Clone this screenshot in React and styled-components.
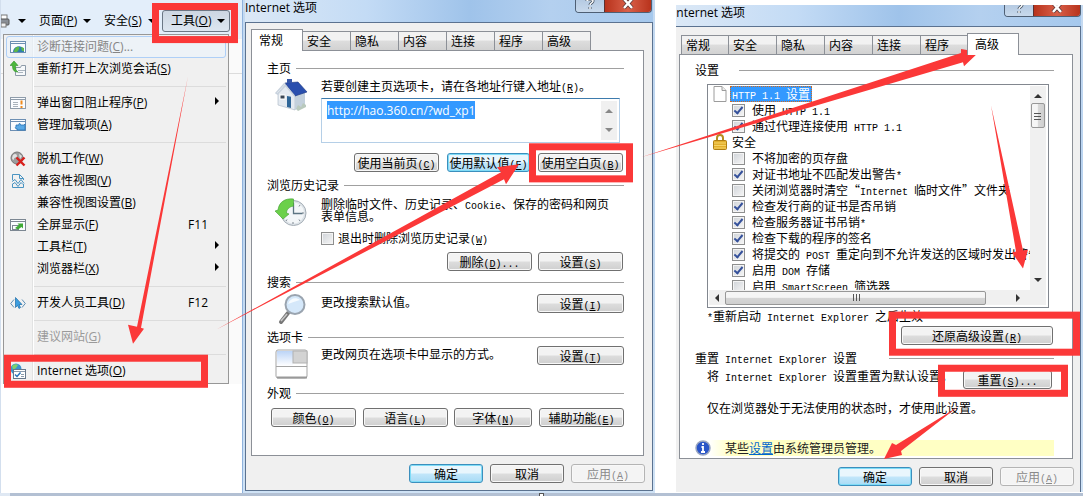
import React from "react";
import styled, { createGlobalStyle, css } from "styled-components";

const ui = `"Open Sans", "Noto Sans CJK SC", sans-serif`;
const song = `"Noto Sans CJK SC", "Liberation Sans", sans-serif`;
const red = "#fb3838";

const Global = createGlobalStyle`
  *, *::before, *::after { box-sizing: border-box; }
  body { margin: 0; background: #fff; color: #000; font: 12px/16px ${song}; }
  button, input { font: inherit; color: inherit; margin: 0; }
`;

/* ---------- text with accelerator keys ---------- */
const Half = styled.span`
  font: 10px/0 "Liberation Mono", monospace;
  white-space: pre;
`;

const accel = (s) => {
  const i = s.indexOf("&");
  if (i < 0) return s;
  return (
    <>
      {s.slice(0, i)}
      <u>{s[i + 1]}</u>
      {s.slice(i + 2)}
    </>
  );
};

const T = ({ children }) =>
  children
    .split(/([\x20-\x7e]+)/)
    .map((part, i) => (i % 2 ? <Half key={i}>{accel(part)}</Half> : part));

/* ---------- page ---------- */
const Page = styled.main`
  position: relative;
  overflow: hidden;
`;

const Columns = styled.div`
  display: grid;
  grid-template-columns: minmax(0, 242fr) minmax(0, 413fr) 21fr minmax(0, 407fr);
  align-items: start;
`;

const Taskbar = styled.div`
  display: flex;
  justify-content: center;
  height: 4px;
  background: linear-gradient(90deg, #dfe8f3 10px, #b3c0d3 10px);
`;

const Handle = styled.i`
  width: 5px;
  border: 1px solid #555;
  border-bottom: 0;
  background: #fff;
`;

const Marks = styled.svg`
  position: absolute;
  inset: 0;
  width: 100%;
  height: 100%;
  pointer-events: none;
`;

/* ---------- browser column ---------- */
const Browser = styled.section`
  height: 100%;
  border-left: 1px solid #d3dfee;
  font-family: ${ui};
`;

const CommandBar = styled.div`
  display: flex;
  align-items: center;
  height: 34px;
  padding-top: 7px;
  background: #e3eefa;
`;

const Command = styled.button`
  display: flex;
  align-items: center;
  justify-content: space-between;
  width: 65px;
  height: 22px;
  padding: 0 13px 0 0;
  border: 0;
  background: none;
  white-space: nowrap;
  ${(p) =>
    p.$first &&
    css`
      width: 38px;
    `}
  ${(p) =>
    p.$open &&
    css`
      width: 68px;
      margin-left: -7px;
      padding: 0 4px 0 8px;
      border: 1px solid #6b7785;
      border-radius: 3px;
      background: linear-gradient(#ccd6e2, #dde6f0);
    `}
`;

const Down = styled.i`
  border: 4px solid transparent;
  border-top-color: #000;
  border-bottom: 0;
`;

const MenuWrap = styled.div`
  padding: 0 13px 0 2px;
  background: linear-gradient(#e9f0f8 5px, #fafafa 5px 39px, #dcdcdc 39px 40px, #fafafa 40px);
`;

const Menu = styled.div`
  position: relative;
  padding: 1px 2px;
  border: 1px solid #979797;
  background: linear-gradient(90deg, #f1f1f1 28px, #e2e3e3 28px 29px, #fff 29px 30px, #f0f0f0 30px);
`;

const MenuItem = styled.button`
  display: flex;
  align-items: center;
  width: 100%;
  height: 22px;
  padding: 0 17px 0 3px;
  border: 1px solid transparent;
  border-radius: 3px;
  background: none;
  text-align: left;
  white-space: nowrap;
  &:disabled {
    color: #9a9a9a;
  }
  ${(p) =>
    p.$hot &&
    css`
      color: #858585 !important;
      border-color: #aecff7;
      background: rgba(235, 243, 252, 0.6);
    `}
`;

const MenuIcon = styled.span`
  display: flex;
  width: 27px;
`;

const Shortcut = styled.span`
  margin-left: auto;
`;

const Sub = styled.i`
  margin: 0 -11px 4px auto;
  border: 4px solid transparent;
  border-left-color: #000;
  border-right: 0;
`;

const Sep = styled.hr`
  height: 1px;
  margin: 6px 0 5px 28px;
  border: 0;
  background: #dcdcdc;
`;

/* ---------- dialog chrome ---------- */
const Dialog = styled.section`
  ${(p) =>
    p.$cut
      ? css`
          grid-column: 4;
          margin-top: 5px;
          padding: 0 2px 0 0;
        `
      : css`
          padding: 0 2px 2px;
          border-left: 1px solid #8fb2dc;
        `}
  background: linear-gradient(#c5daf1 0, #b9d3ef 160px, #cfe2f5);
`;

const TitleBar = styled.header`
  display: flex;
  align-items: flex-start;
  justify-content: space-between;
  height: ${(p) => (p.$cut ? 21 : 22)}px;
  padding-right: ${(p) => (p.$cut ? 0 : 1)}px;
  overflow: hidden;
  font-family: ${ui};
  background: linear-gradient(90deg, #dbe8f6 0, #c3dbf5 30%, #9fc3ea 55%, #b4d0ef 75%, #a5c8ed);
`;

const Title = styled.h2`
  margin: 0 0 0 ${(p) => (p.$cut ? -3 : 0)}px;
  font-size: 12px;
  font-weight: 400;
`;

const WinButtons = styled.div`
  display: flex;
  height: ${(p) => (p.$cut ? 12 : 13)}px;
  border: 1px solid #4e5f74;
  border-top: 0;
  border-radius: 0 0 4px 4px;
  overflow: hidden;
`;

const WinButton = styled.button`
  display: flex;
  align-items: flex-end;
  justify-content: center;
  width: ${(p) => (p.$close ? 47 : 28)}px;
  height: 100%;
  padding: 0 0 3px;
  border: 0;
  border-left: ${(p) => (p.$close ? "1px solid #5c3030" : "0")};
  background: ${(p) =>
    p.$close
      ? "linear-gradient(90deg, #b8331c, #d9604a 50%, #b8331c)"
      : "linear-gradient(#b5cae2, #c8d9ec)"};
`;

const Client = styled.div`
  padding: ${(p) => (p.$cut ? "6px 7px 6px 3px" : "6px 8px 7px 5px")};
  border: 1px solid #5b7290;
  border-left-width: ${(p) => (p.$cut ? 0 : 1)}px;
  border-bottom-width: ${(p) => (p.$cut ? 0 : 1)}px;
  background: #f0f0f0;
`;

const TabRow = styled.div`
  display: flex;
  align-items: flex-end;
  height: 21px;
  padding-left: ${(p) => (p.$cut ? 2 : 0)}px;
`;

const Tab = styled.button`
  width: 48px;
  height: 19px;
  padding: 0 0 0 4px;
  border: 1px solid #8c9097;
  border-bottom: 0;
  border-left-width: ${(p) => (p.$edge ? 1 : 0)}px;
  background: linear-gradient(#f2f2f2 0 45%, #dddddd 50%, #d2d2d2);
  text-align: left;
  line-height: 18px;
  ${(p) =>
    p.$active &&
    css`
      width: 52px;
      height: 22px;
      margin: 0 0 -1px ${p.$edge ? 0 : -2}px;
      padding: 0 0 2px 7px;
      border-left-width: 1px;
      background: #fff;
      z-index: 1;
    `}
`;

const Sheet = styled.div`
  padding: ${(p) => (p.$cut ? "7px 18px 2px 15px" : "9px 19px 28px 15px")};
  border: 1px solid #8c9097;
  background: #fff;
`;

const Footer = styled.footer`
  display: flex;
  justify-content: flex-end;
  gap: 7px;
  margin: 8px -1px 0 0;
`;

const Button = styled.button`
  width: ${(p) => p.$w || 85}px;
  height: 19px;
  padding: 0;
  border: 1px solid #707070;
  border-radius: 3px;
  background: linear-gradient(#f3f3f3 0 48%, #dddddd 52%, #cfcfcf);
  box-shadow: inset 0 0 0 1px #f8f8f8;
  line-height: 16px;
  white-space: nowrap;
  ${(p) =>
    p.$hot &&
    css`
      border-color: #3c8fbd;
      background: linear-gradient(#e9f6fd 0 48%, #c2e6fa 52%, #a9dbf5);
      box-shadow: inset 0 0 0 1px #7fdcf7;
    `}
  &:disabled {
    color: #8a8a8a;
    border-color: #b4b4b4;
    background: #f4f4f4;
  }
`;

/* ---------- groups ---------- */
const Legend = styled.h3`
  display: flex;
  align-items: center;
  gap: ${(p) => p.$gap || 5}px;
  margin: ${(p) => p.$top || 0}px 0 0;
  font-size: 12px;
  font-weight: 400;
  white-space: nowrap;
  &::after {
    content: "";
    flex: 1;
    height: 1px;
    background: #a0a0a0;
  }
`;

const Body = styled.div`
  display: grid;
  grid-template-columns: 54px minmax(0, 1fr);
  padding-top: ${(p) => p.$top || 0}px;
  min-height: ${(p) => p.$h || 0}px;
`;

const Art = styled.div`
  padding: ${(p) => p.$top || 0}px 0 0 8px;
  height: 0;
`;

const Line = styled.div`
  display: flex;
  justify-content: space-between;
  align-items: flex-start;
  padding-top: 1px;
`;

const Text = styled.p`
  margin: 0;
  line-height: ${(p) => p.$lh || 16}px;
  white-space: nowrap;
`;

const Buttons = styled.div`
  display: flex;
  justify-content: ${(p) => (p.$spread ? "space-between" : "flex-end")};
  gap: ${(p) => (p.$spread ? 0 : p.$gap || 6)}px;
  margin: ${(p) => p.$top || 0}px 0 0;
  padding: 0 ${(p) => (p.$spread ? 0 : 1)}px 0 ${(p) => (p.$spread ? 4 : 0)}px;
`;

const UrlBox = styled.div`
  display: flex;
  justify-content: space-between;
  align-items: flex-start;
  height: 45px;
  margin: 4px 4px 0 0;
  padding: 2px 2px 2px 5px;
  border: 1px solid #b5cfe7;
  border-top-color: #3d7bad;
`;

const Url = styled.input`
  field-sizing: content;
  height: 18px;
  padding: 0;
  border: 0;
  background: #3399ff;
  color: #fff;
  font-family: ${ui};
`;

const ScrollBar = styled.div`
  display: flex;
  flex-direction: ${(p) => (p.$horizontal ? "row" : "column")};
  justify-content: space-between;
  align-items: center;
  width: ${(p) => (p.$horizontal ? "auto" : "16px")};
  height: ${(p) => (p.$horizontal ? "15px" : "100%")};
  padding: ${(p) => (p.$horizontal ? "0 26px 0 6px" : "8px 0")};
  background: #f0f0f0;
`;

const Caret = styled.i`
  border: 4px solid transparent;
  ${(p) => p.$dir === "up" && `border-bottom-color: ${p.$c || "#333"}; border-top: 0;`}
  ${(p) => p.$dir === "down" && `border-top-color: ${p.$c || "#333"}; border-bottom: 0;`}
  ${(p) => p.$dir === "left" && `border-right-color: #333; border-left: 0;`}
  ${(p) => p.$dir === "right" && `border-left-color: #333; border-right: 0;`}
`;

const Thumb = styled.div`
  display: flex;
  align-items: center;
  justify-content: center;
  border: 1px solid #979797;
  border-radius: 2px;
  ${(p) =>
    p.$horizontal
      ? css`
          flex: 1;
          height: 14px;
          margin: 0 30px 0 6px;
          background: linear-gradient(#f5f5f5 45%, #d6d6d6 50%, #cfcfcf);
        `
      : css`
          width: 14px;
          height: 25px;
          margin: 5px 0 auto;
          background: linear-gradient(90deg, #f5f5f5 45%, #d9d9d9 50%, #cfcfcf);
        `}
`;

const Check = styled.label`
  display: flex;
  align-items: center;
  gap: ${(p) => p.$gap || 4}px;
  height: 16px;
  margin-top: ${(p) => p.$top || 0}px;
  white-space: nowrap;
`;

const Box = styled.input`
  appearance: none;
  flex: none;
  display: grid;
  place-items: center;
  width: 13px;
  height: 13px;
  border: 1px solid #8e8f8f;
  background: linear-gradient(135deg, #cfd3d8, #f6f6f6);
  box-shadow: inset 0 0 0 1px #f4f4f4;
  &:checked::after {
    content: "";
    width: 5px;
    height: 9px;
    margin-top: -2px;
    border: solid #35519b;
    border-width: 0 2px 2px 0;
    transform: rotate(40deg);
  }
`;

/* ---------- advanced list ---------- */
const List = styled.div`
  display: grid;
  grid-template-columns: minmax(0, 1fr) auto;
  grid-template-rows: 204px auto;
  margin: 6px 5px 0 12px;
  padding: 1px 2px 2px 1px;
  border: 1px solid #82878f;
`;

const Rows = styled.div`
  overflow: hidden;
`;

const Heading = styled.div`
  display: flex;
  align-items: center;
  gap: 5px;
  height: 16px;
  padding-left: 4px;
`;

const Selected = styled.span`
  padding: 0 2px;
  margin-left: -2px;
  outline: 1px dotted #d2691e;
  outline-offset: -1px;
  background: #3399ff;
  color: #fff;
`;

const Option = styled(Check)`
  padding-left: 23px;
`;

const Across = styled.div`
  grid-column: 1 / -1;
`;

const ResetRow = styled.div`
  display: flex;
  align-items: flex-start;
  justify-content: space-between;
  margin: ${(p) => p.$top}px 2px 0 12px;
`;

const Drop = styled.div`
  padding-top: 2px;
`;

const Notice = styled.div`
  display: flex;
  align-items: center;
  gap: 14px;
  height: 16px;
  margin-top: 24px;
  background: linear-gradient(90deg, #fff 14px, #ffffc4 36px);
  color: #222;
`;

const Link = styled.a`
  color: #0066cc;
`;

/* ---------- icons ---------- */
const Svg16 = ({ children }) => (
  <svg width="16" height="16" viewBox="0 0 16 16" fill="none">
    {children}
  </svg>
);

const Win = ({ c = "#6d8fb3" }) => (
  <>
    <rect x=".5" y="2.5" width="15" height="11" fill="#fafcff" stroke={c} />
    <path d="M1 4.5h14" stroke={c} />
  </>
);

const icons = {
  diagnose: (
    <Svg16>
      <Win />
      <path d="M3 13a6 6 0 0 1 11-3v3z" fill="#2e7fae" />
      <path d="M4 12c1-4 4-5 5-4s-1 4-2 5H4zM11 8l3 1v3h-2z" fill="#5fb84a" />
    </Svg16>
  ),
  reopen: (
    <Svg16>
      <path d="M5.500 6.500h5l1-2h4v10h-10z" fill="#f7f9fb" stroke="#8d9aa8" />
      <path d="M8 9.500h7M8 11.500h5" stroke="#aab4be" />
      <path d="M4 0l4 4.500H5.500c0 4 .5 5 2.500 6.500-4 0-5.500-2-5.500-6.500H0z" fill="#4db83c" stroke="#2f8f2a" strokeWidth=".6" />
    </Svg16>
  ),
  popup: (
    <Svg16>
      <Win c="#8f9caa" />
      <path d="M3 7.500h5M3 9.500h5M3 11.500h5" stroke="#a9b2bb" />
      <path d="M11.500 5.500v4M11.500 11v2" stroke="#ef8a1d" strokeWidth="2" />
    </Svg16>
  ),
  addons: (
    <Svg16>
      <Win />
      <path d="M6 8h3c-1-2 2-2 1.500 0H14l1-1v6H7v-1.500c-2 1-2-2-1-1.500z" fill="#5aa9e6" stroke="#2c74b5" strokeWidth=".8" />
    </Svg16>
  ),
  offline: (
    <Svg16>
      <circle cx="7" cy="7" r="6" fill="#9c9c9c" stroke="#777" />
      <path d="M3 4c2-2 4-1 4 1s-3 1-3 3-2 0-2-1zM9 3l3 2-2 3z" fill="#e2e2e2" />
      <path d="M6.500 6.500l8 8M14.500 6.500l-8 8" stroke="#d8201c" strokeWidth="2.400" />
    </Svg16>
  ),
  compat: (
    <Svg16>
      <path d="M2.500 7V1.500h7l4 4V7M2.500 11v3.500h11V11M9.500 1.500v4h4" stroke="#4a94c2" />
      <path d="M2 8.500l3-2 3 4 3-4 3 4M2 11.500l3-2 3 4 3-4 2 2" stroke="#4a94c2" />
    </Svg16>
  ),
  full: (
    <Svg16>
      <Win c="#7c8792" />
      <rect x="2.500" y="8.500" width="6" height="4" stroke="#7c8792" />
      <path d="M5 11l4-3-1.500-1.500H13v5L11.500 10 8 12.500z" fill="#3faa36" />
    </Svg16>
  ),
  dev: (
    <Svg16>
      <path d="M4 4.500L.7 8.500 4 12.500M12 4.500l3.300 4-3.300 4" stroke="#5c8fb5" />
      <path d="M5.500 2.500v10l2-2 1.500 3 1.500-1-1.500-3H12z" fill="#3c9ee0" stroke="#1d6ba6" strokeWidth=".7" />
    </Svg16>
  ),
  options: (
    <Svg16>
      <circle cx="6" cy="6" r="5.500" fill="#3b93cf" />
      <path d="M2 3c2-2 5-2 6-1L6 5 3 7z" fill="#7fd06a" />
      <rect x="3.500" y="6.500" width="12" height="9" fill="#fff" stroke="#66788c" />
      <path d="M4 8.500h11M11 11.500h3M11 13.500h3" stroke="#8a9aab" />
      <path d="M5 11.500l2 2 3.500-4" stroke="#2672b8" strokeWidth="1.500" />
    </Svg16>
  ),
};

const Printer = () => (
  <svg width="9" height="16" viewBox="0 0 9 16">
    <rect y="2" width="6" height="5" fill="#fff" stroke="#777" />
    <rect x="-3" y="6" width="11" height="6" rx="1" fill="#8a8f96" stroke="#555" />
    <rect y="10" width="5" height="4" fill="#f2f2f2" stroke="#777" />
  </svg>
);

const House = () => (
  <svg width="34" height="32" viewBox="0 0 34 32">
    <path d="M3 14l8-9 9 11v15L3 26z" fill="#e4eaf1" stroke="#a9b5c2" strokeWidth=".6" />
    <path d="M20 16l10-3v13l-10 5z" fill="#c3d0dc" />
    <path d="M10 4l13-1 9 10-12 4z" fill="#2a4fae" stroke="#1b3680" strokeWidth=".6" />
    <path d="M12 0h5v4h-5z" fill="#3757a8" />
    <path d="M10 4L1 14l1.500 1L10.500 6.500l9 10.500" fill="none" stroke="#c9d3de" strokeWidth="1.500" />
    <rect x="5" y="16" width="5" height="4" fill="#3c4856" stroke="#fff" />
    <path d="M12 17l4 .8V29l-4-1z" fill="#2f6698" />
    <path d="M21 30l2-4 3 2 2-4 3 2v2l-8 4z" fill="#b9c9bd" />
  </svg>
);

const History = () => (
  <svg width="34" height="30" viewBox="0 0 34 30">
    <circle cx="18.500" cy="15" r="12.500" fill="#dde3e8" stroke="#a3acb4" />
    <circle cx="18.500" cy="15" r="10.500" fill="#f3f6f8" />
    <path d="M18 4v2M18 24v2M29 15h-2M25 7l-1 1.500M25 23l-1-1.500M11 23l1-1.500" stroke="#7c868f" />
    <path d="M18.500 5v10.500h9" fill="none" stroke="#5c7482" strokeWidth="1.300" />
    <path d="M18.500 1C10 0 4 4 3 12L0 13l8 8 6-5-2.500-1c0-3 2-6 7-7z" fill="#6bd04b" stroke="#3f9d30" strokeWidth=".6" />
  </svg>
);

const Lens = () => (
  <svg width="34" height="33" viewBox="0 0 34 33">
    <path d="M13 20l-7 9" stroke="#777" strokeWidth="4" strokeLinecap="round" />
    <path d="M12 21l-6 7" stroke="#c8c8c8" strokeWidth="1.500" />
    <circle cx="20" cy="11.500" r="9.500" fill="#d5e8fa" stroke="#9aa4af" strokeWidth="2" />
    <path d="M13 11c2-6 8-7 12-4-5 1-8 3-12 4z" fill="#f6fbff" />
  </svg>
);

const TabsArt = () => (
  <svg width="34" height="30" viewBox="0 0 34 30">
    <defs>
      <linearGradient id="tabBlue" x2="0" y2="1">
        <stop stopColor="#bcd4f7" />
        <stop offset="1" stopColor="#fff" />
      </linearGradient>
    </defs>
    <rect x="1" y="1" width="31" height="28" rx="2" fill="#fff" stroke="#a5a5a5" />
    <rect x="2" y="2" width="16" height="15" fill="url(#tabBlue)" />
    <rect x="18" y="2" width="14" height="12" fill="#d3d3d3" stroke="#b2b2b2" />
    <path d="M1 17.500h31" stroke="#a5a5a5" />
    <path d="M2 28.500h30" stroke="#999" strokeWidth="2" />
  </svg>
);

const Sheet16 = () => (
  <svg width="14" height="16" viewBox="0 0 14 16">
    <path d="M1 .5h8l4 4v11H1z" fill="#fff" stroke="#9c9c9c" />
    <path d="M9 .5v4h4" fill="#eee" stroke="#9c9c9c" />
  </svg>
);

const Lock = () => (
  <svg width="14" height="16" viewBox="0 0 14 16">
    <path d="M4 7V4a3 3 0 0 1 6 0v3" fill="none" stroke="#b78c1f" strokeWidth="2" />
    <rect x=".5" y="6.500" width="13" height="9" rx="1" fill="#e3af2a" stroke="#b07f12" />
    <path d="M1 9h12M1 11.500h12M1 14h12" stroke="#f6d468" />
  </svg>
);

const Info = () => (
  <svg width="16" height="16" viewBox="0 0 16 16">
    <circle cx="8" cy="8" r="7" fill="#2a55c8" stroke="#9aa6c0" strokeWidth="1.500" />
    <path d="M8 3v2M6.500 7H8v5M6 12h4" fill="none" stroke="#fff" strokeWidth="1.800" />
  </svg>
);

const Question = () => (
  <svg width="10" height="10" viewBox="0 0 10 10" fill="none">
    <path d="M2 2c0-2 6-2 6 0S5 4 5 6M5 8v2" stroke="#4a5665" strokeWidth="3" />
    <path d="M2 2c0-2 6-2 6 0S5 4 5 6M5 8v2" stroke="#fff" strokeWidth="1.500" />
  </svg>
);

const Cross = () => (
  <svg width="12" height="9" viewBox="0 0 12 9">
    <path d="M2-1l8 9M10-1L2 8" stroke="#5c3535" strokeWidth="4" />
    <path d="M2-1l8 9M10-1L2 8" stroke="#fff" strokeWidth="2.500" />
  </svg>
);

/* ---------- data ---------- */
const menu = [
  { icon: "diagnose", text: "诊断连接问题(&C)...", disabled: true, hot: true },
  { icon: "reopen", text: "重新打开上次浏览会话(&S)" },
  null,
  { icon: "popup", text: "弹出窗口阻止程序(&P)", sub: true },
  { icon: "addons", text: "管理加载项(&A)" },
  null,
  { icon: "offline", text: "脱机工作(&W)" },
  { icon: "compat", text: "兼容性视图(&V)" },
  { text: "兼容性视图设置(&B)" },
  { icon: "full", text: "全屏显示(&F)", key: "F11" },
  { text: "工具栏(&T)", sub: true },
  { text: "浏览器栏(&X)", sub: true },
  null,
  { icon: "dev", text: "开发人员工具(&D)", key: "F12" },
  null,
  { text: "建议网站(&G)", disabled: true },
  null,
  { icon: "options", text: "Internet 选项(&O)" },
];

const tabs = ["常规", "安全", "隐私", "内容", "连接", "程序", "高级"];

const httpOptions = [
  ["使用 HTTP 1.1", true],
  ["通过代理连接使用 HTTP 1.1", true],
];

const securityOptions = [
  ["不将加密的页存盘", false],
  ["对证书地址不匹配发出警告*", true],
  ["关闭浏览器时清空“Internet 临时文件”文件夹", false],
  ["检查发行商的证书是否吊销", true],
  ["检查服务器证书吊销*", true],
  ["检查下载的程序的签名", true],
  ["将提交的 POST 重定向到不允许发送的区域时发出警告", true],
  ["启用 DOM 存储", true],
  ["启用 SmartScreen 筛选器", false],
];

/* ---------- composed parts ---------- */
const OptionsDialog = ({ cut, active, children }) => (
  <Dialog $cut={cut}>
    <TitleBar $cut={cut}>
      <Title $cut={cut}>Internet 选项</Title>
      <WinButtons $cut={cut}>
        <WinButton aria-label="帮助"><Question /></WinButton>
        <WinButton $close aria-label="关闭"><Cross /></WinButton>
      </WinButtons>
    </TitleBar>
    <Client $cut={cut}>
      <TabRow $cut={cut}>
        {tabs.map((t, i) => (
          <Tab key={t} $active={t === active} $edge={i === 0}>{t}</Tab>
        ))}
      </TabRow>
      <Sheet $cut={cut}>{children}</Sheet>
      <Footer>
        <Button $w={74} $hot>确定</Button>
        <Button $w={74}>取消</Button>
        <Button $w={74} disabled><T>应用(&A)</T></Button>
      </Footer>
    </Client>
  </Dialog>
);

const Options = ({ items }) =>
  items.map(([text, on]) => (
    <Option key={text} $gap={7}>
      <Box type="checkbox" defaultChecked={on} />
      <span><T>{text}</T></span>
    </Option>
  ));

const GeneralTab = () => (
  <>
    <Legend>主页</Legend>
    <Body $top={2}>
      <Art $top={1}><House /></Art>
      <div>
        <Text><T>若要创建主页选项卡，请在各地址行键入地址(&R)。</T></Text>
        <UrlBox>
          <Url aria-label="主页地址" defaultValue="http://hao.360.cn/?wd_xp1" />
          <ScrollBar>
            <Caret $dir="up" $c="#888" />
            <Caret $dir="down" $c="#888" />
          </ScrollBar>
        </UrlBox>
        <Buttons $top={10} $gap={8}>
          <Button><T>使用当前页(&C)</T></Button>
          <Button $w={83} $hot><T>使用默认值(&F)</T></Button>
          <Button><T>使用空白页(&B)</T></Button>
        </Buttons>
      </div>
    </Body>
    <Legend $top={5}>浏览历史记录</Legend>
    <Body $top={5}>
      <Art><History /></Art>
      <div>
        <Text $lh={12}>
          <T>删除临时文件、历史记录、Cookie、保存的密码和网页</T>
          <br />
          表单信息。
        </Text>
        <Check $top={8}>
          <Box type="checkbox" />
          <span><T>退出时删除浏览历史记录(&W)</T></span>
        </Check>
        <Buttons $top={6}>
          <Button><T>删除(&D)...</T></Button>
          <Button><T>设置(&S)</T></Button>
        </Buttons>
      </div>
    </Body>
    <Legend $top={3}>搜索</Legend>
    <Body $top={3} $h={39}>
      <Art><Lens /></Art>
      <Line>
        <Text><T>更改搜索默认值。</T></Text>
        <Button $w={87}><T>设置(&I)</T></Button>
      </Line>
    </Body>
    <Legend>选项卡</Legend>
    <Body $h={40}>
      <Art $top={4}><TabsArt /></Art>
      <Line>
        <Text><T>更改网页在选项卡中显示的方式。</T></Text>
        <Button $w={87}><T>设置(&T)</T></Button>
      </Line>
    </Body>
    <Legend>外观</Legend>
    <Buttons $spread $top={7}>
      <Button><T>颜色(&O)</T></Button>
      <Button><T>语言(&L)</T></Button>
      <Button $w={78}><T>字体(&N)</T></Button>
      <Button><T>辅助功能(&E)</T></Button>
    </Buttons>
  </>
);

const AdvancedTab = () => (
  <>
    <Legend $gap={20}>设置</Legend>
    <List>
      <Rows>
        <Heading>
          <Sheet16 />
          <Selected><T>HTTP 1.1 设置</T></Selected>
        </Heading>
        <Options items={httpOptions} />
        <Heading><Lock />安全</Heading>
        <Options items={securityOptions} />
      </Rows>
      <ScrollBar>
        <Caret $dir="up" />
        <Thumb>
          <svg width="8" height="8"><path d="M0 1.500h7M0 4.500h7M0 7.500h7" stroke="#555" /></svg>
        </Thumb>
        <Caret $dir="down" />
      </ScrollBar>
      <Across>
        <ScrollBar $horizontal>
          <Caret $dir="left" />
          <Thumb $horizontal>
            <svg width="8" height="8"><path d="M1.500 0v7M4.500 0v7M7.500 0v7" stroke="#555" /></svg>
          </Thumb>
          <Caret $dir="right" />
        </ScrollBar>
      </Across>
    </List>
    <ResetRow $top={0}>
      <Text><T>*重新启动 Internet Explorer 之后生效</T></Text>
    </ResetRow>
    <Buttons $top={2}>
      <Button $w={152}><T>还原高级设置(&R)</T></Button>
    </Buttons>
    <Legend $top={5} $gap={32}><span><T>重置 Internet Explorer 设置</T></span></Legend>
    <ResetRow $top={2}>
      <Text><T>将 Internet Explorer 设置重置为默认设置。</T></Text>
      <Drop><Button $w={89}><T>重置(&S)...</T></Button></Drop>
    </ResetRow>
    <ResetRow $top={11}>
      <Text>仅在浏览器处于无法使用的状态时，才使用此设置。</Text>
    </ResetRow>
    <Notice>
      <Info />
      <Text>某些<Link href="#settings">设置</Link>由系统管理员管理。</Text>
    </Notice>
  </>
);

export default function App() {
  return (
    <Page lang="zh-CN">
      <Global />
      <Columns>
        <Browser>
          <CommandBar>
            <Command $first aria-label="打印"><Printer /><Down /></Command>
            <Command><span>{accel("页面(&P)")}</span><Down /></Command>
            <Command><span>{accel("安全(&S)")}</span><Down /></Command>
            <Command $open><span>{accel("工具(&O)")}</span><Down /></Command>
          </CommandBar>
          <MenuWrap>
            <Menu role="menu">
              {menu.map((m, i) =>
                m ? (
                  <MenuItem key={i} role="menuitem" disabled={m.disabled} $hot={m.hot}>
                    <MenuIcon>{m.icon && icons[m.icon]}</MenuIcon>
                    <span>{accel(m.text)}</span>
                    {m.key && <Shortcut>{m.key}</Shortcut>}
                    {m.sub && <Sub />}
                  </MenuItem>
                ) : (
                  <Sep key={i} />
                )
              )}
            </Menu>
          </MenuWrap>
        </Browser>
        <OptionsDialog active="常规"><GeneralTab /></OptionsDialog>
        <OptionsDialog cut active="高级"><AdvancedTab /></OptionsDialog>
      </Columns>
      <Taskbar><Handle /></Taskbar>
      <Marks viewBox="0 0 1083 496" preserveAspectRatio="none" aria-hidden="true">
        <g fill="none" stroke={red} strokeWidth="7">
          <rect x="155.500" y="6.500" width="79" height="33" />
          <rect x="7.500" y="357.500" width="197" height="26" />
          <rect x="532.500" y="146.500" width="97" height="32" />
          <rect x="892.500" y="314.500" width="184" height="37" />
          <rect x="941.500" y="367.500" width="123" height="25" />
        </g>
        <g fill={red}>
          <path d="M188 76L137 326l-9-2 5 19 11-15-3-1z" />
          <path d="M216 329L501 172l-4-5 22-3-13 20-2-5z" />
          <path d="M641 157L961 53v-4l18 3-15 14-1-4z" />
          <path d="M991 105l25 146-4 1 11 16 5-19-5 1z" />
          <path d="M958 406l-62 38-4-2-8 16 18-4-1-4z" />
        </g>
      </Marks>
    </Page>
  );
}
